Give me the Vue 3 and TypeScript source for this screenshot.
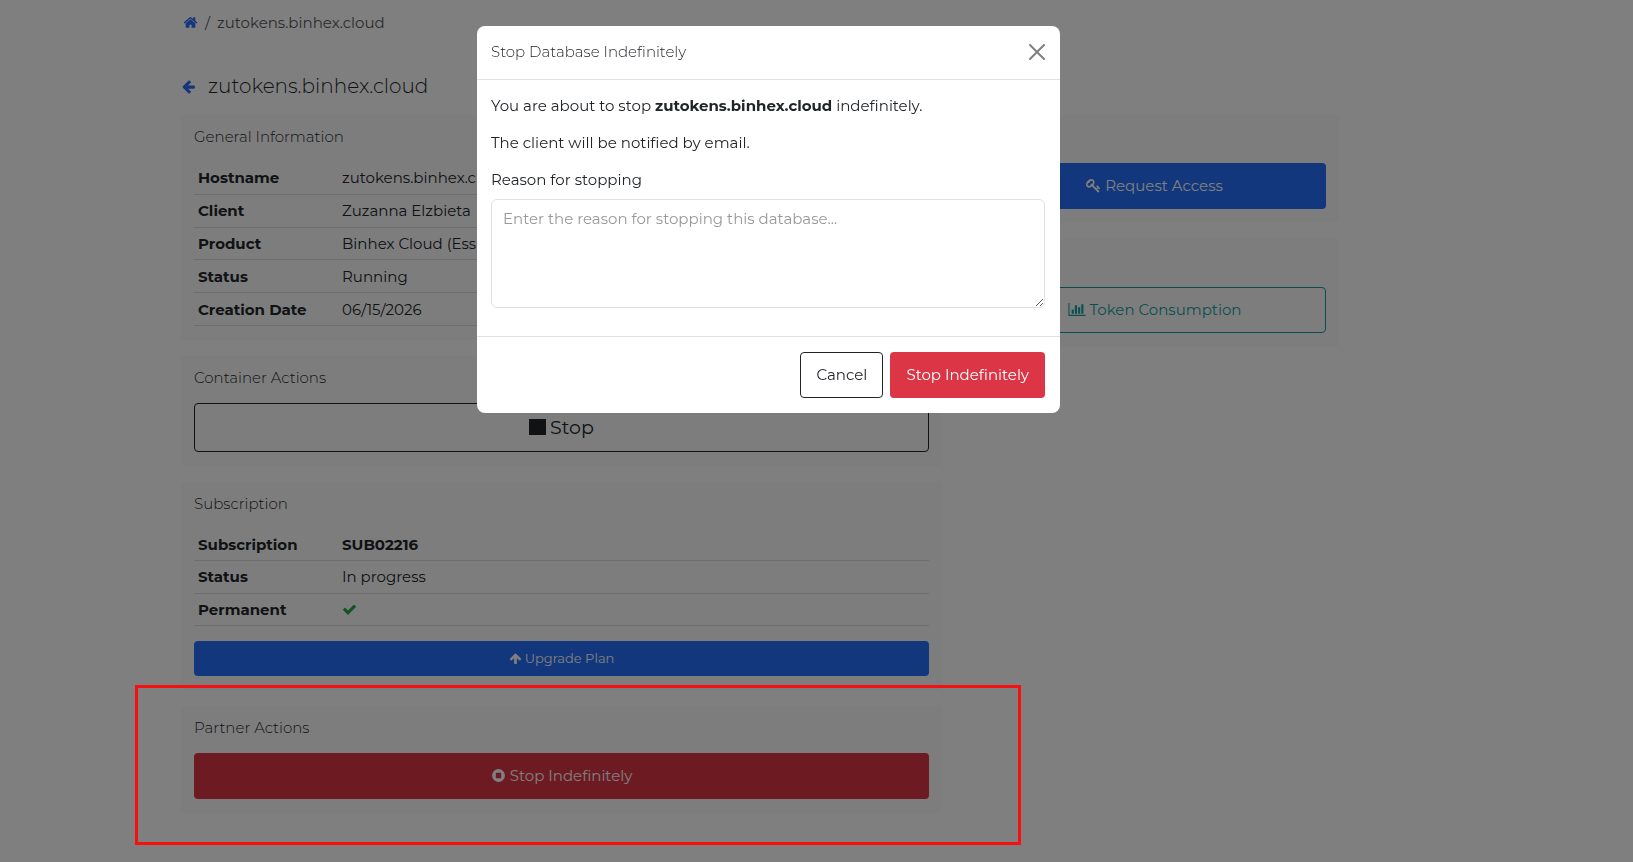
<script setup lang="ts">
import { ref } from 'vue'

interface Row {
  label: string
  value: string
  strong?: boolean
  check?: boolean
}

const hostname = 'zutokens.binhex.cloud'

const general: Row[] = [
  { label: 'Hostname', value: hostname },
  { label: 'Client', value: 'Zuzanna Elzbieta' },
  { label: 'Product', value: 'Binhex Cloud (Ess' },
  { label: 'Status', value: 'Running' },
  { label: 'Creation Date', value: '06/15/2026' },
]

const subscription: Row[] = [
  { label: 'Subscription', value: 'SUB02216', strong: true },
  { label: 'Status', value: 'In progress' },
  { label: 'Permanent', value: '', check: true },
]

const modalOpen = ref(true)
const reason = ref('')

const icons = {
  home: 'M1472 992v480q0 26-19 45t-45 19h-384v-384h-256v384h-384q-26 0-45-19t-19-45v-480q0-1 .5-3t.5-3l575-474 575 474q1 2 1 6zm223-69l-62 74q-8 9-21 11h-3q-13 0-21-7l-692-577-692 577q-12 8-24 7-13-2-21-11l-62-74q-8-10-7-23.5t11-21.5l719-599q32-26 76-26t76 26l244 204v-195q0-14 9-23t23-9h192q14 0 23 9t9 23v408l219 182q10 8 11 21.5t-7 23.5z',
  left: 'M1664 896v128q0 53-32.5 90.5t-84.5 37.5h-704l293 294q38 36 38 90t-38 90l-75 76q-37 37-90 37-52 0-91-37l-651-652q-37-37-37-90 0-52 37-91l651-650q38-38 91-38 52 0 90 38l75 74q38 38 38 91t-38 91l-293 293h704q52 0 84.5 37.5t32.5 90.5z',
  up: 'M1675 971q0 51-37 90l-75 75q-38 38-91 38-54 0-90-38l-294-293v704q0 52-37.5 84.5t-90.5 32.5h-128q-53 0-90.5-32.5t-37.5-84.5v-704l-294 293q-36 38-90 38t-90-38l-75-75q-38-38-38-90 0-53 38-91l651-651q35-37 90-37 54 0 91 37l651 651q37 39 37 91z',
  check: 'M1671 566q0 40-28 68l-724 724-136 136q-28 28-68 28t-68-28l-136-136-362-362q-28-28-28-68t28-68l136-136q28-28 68-28t68 28l294 295 656-657q28-28 68-28t68 28l136 136q28 28 28 68z',
  chart: 'M640 896v512h-256v-512h256zm384-512v1024h-256v-1024h256zm1024 1152v128h-2048v-1536h128v1408h1920zm-640-896v768h-256v-768h256zm384-384v1152h-256v-1152h256z',
  key: 'M832 512q0-80-56-136t-136-56-136 56-56 136q0 42 19 83-41-19-83-19-80 0-136 56t-56 136 56 136 136 56 136-56 56-136q0-42-19-83 41 19 83 19 80 0 136-56t56-136zm851 704q0 17-49 66t-66 49q-9 0-28.5-16t-36.5-33-38.5-40-24.5-26l-96 96 220 220q28 28 28 68 0 42-39 81t-81 39q-40 0-68-28l-671-671q-176 131-365 131-163 0-265.5-102.5t-102.5-265.5q0-160 95-313t248-248 313-95q163 0 265.5 102.5t102.5 265.5q0 189-131 365l355 355 96-96q-3-3-26-24.5t-40-38.5-33-36.5-16-28.5q0-17 49-66t66-49q13 0 23 10 6 6 46 44.5t82 79.5 86.5 86 73 78 28.5 41z',
  stopCircle: 'M896 128a768 768 0 1 0 0 1536a768 768 0 1 0 0-1536zM624 576h544q48 0 48 48v544q0 48-48 48h-544q-48 0-48-48v-544q0-48 48-48z',
}
</script>

<template>
  <div class="page">
    <main class="shell">
      <nav class="crumbs" aria-label="Breadcrumb">
        <a href="#" aria-label="Home">
          <svg class="icon" viewBox="0 0 1792 1792"><path :d="icons.home" /></svg>
        </a>
        <span>/</span>
        <span>{{ hostname }}</span>
      </nav>

      <header class="title">
        <a href="#" aria-label="Back">
          <svg class="icon" viewBox="0 0 1792 1792"><path :d="icons.left" /></svg>
        </a>
        <h1>{{ hostname }}</h1>
      </header>

      <div class="columns">
        <div class="stack">
          <section class="card">
            <h2>General Information</h2>
            <table class="general">
              <tbody>
                <tr v-for="row in general" :key="row.label">
                  <th scope="row">{{ row.label }}</th>
                  <td>{{ row.value }}</td>
                </tr>
              </tbody>
            </table>
          </section>

          <section class="card">
            <h2>Container Actions</h2>
            <button type="button" class="btn outline-dark large">
              <span class="square"></span>Stop
            </button>
          </section>

          <section class="card">
            <h2>Subscription</h2>
            <table class="subscription">
              <tbody>
                <tr v-for="row in subscription" :key="row.label">
                  <th scope="row">{{ row.label }}</th>
                  <td :class="{ strong: row.strong }">
                    <svg v-if="row.check" class="icon check" viewBox="0 0 1792 1792" role="img" aria-label="Yes">
                      <path :d="icons.check" />
                    </svg>
                    <template v-else>{{ row.value }}</template>
                  </td>
                </tr>
              </tbody>
            </table>
            <button type="button" class="btn primary small">
              <svg class="icon tiny" viewBox="0 0 1792 1792"><path :d="icons.up" /></svg>Upgrade Plan
            </button>
          </section>

          <section class="card highlighted">
            <h2>Partner Actions</h2>
            <button type="button" class="btn danger" @click="modalOpen = true">
              <svg class="icon" viewBox="0 0 1792 1792"><path fill-rule="evenodd" :d="icons.stopCircle" /></svg>Stop Indefinitely
            </button>
          </section>
        </div>

        <aside class="stack">
          <section class="card untitled">
            <button type="button" class="btn primary">
              <svg class="icon" viewBox="0 0 1792 1792"><path :d="icons.key" /></svg>Request Access
            </button>
          </section>
          <section class="card untitled">
            <button type="button" class="btn outline-info">
              <svg class="icon wide" viewBox="0 0 2048 1792"><path :d="icons.chart" /></svg>Token Consumption
            </button>
          </section>
        </aside>
      </div>
    </main>

    <div v-if="modalOpen" class="backdrop">
      <div class="modal" role="dialog" aria-modal="true" aria-labelledby="modal-title">
        <header class="modal-head">
          <h2 id="modal-title">Stop Database Indefinitely</h2>
          <button type="button" class="close" aria-label="Close" @click="modalOpen = false">
            <svg viewBox="0 0 16 16"><path d="M1 1L15 15M15 1L1 15" /></svg>
          </button>
        </header>
        <div class="modal-body">
          <p>You are about to stop <strong>{{ hostname }}</strong> indefinitely.</p>
          <p>The client will be notified by email.</p>
          <label for="reason">Reason for stopping</label>
          <textarea id="reason" v-model="reason" placeholder="Enter the reason for stopping this database..."></textarea>
        </div>
        <footer class="modal-foot">
          <button type="button" class="btn outline-dark" @click="modalOpen = false">Cancel</button>
          <button type="button" class="btn danger">Stop Indefinitely</button>
        </footer>
      </div>
    </div>
  </div>
</template>

<style>
body {
  margin: 0;
  background: #fff;
}
</style>

<style scoped>
.page {
  box-sizing: border-box;
  min-height: 100vh;
  padding: 11px 96px 24px;
  color: #212529;
  font-family: Montserrat, Inter, "Open Sans", sans-serif;
  font-size: 15px;
  line-height: 23px;
}
.page *,
.page *::after {
  box-sizing: border-box;
}
.shell {
  max-width: 1158px;
  margin-left: 85px;
}
h1,
h2,
p {
  margin: 0;
}
h1,
h2 {
  font-weight: 300;
}
a {
  display: flex;
  color: #2b6cf6;
}
.icon {
  width: 15px;
  height: 15px;
  flex: none;
  fill: currentColor;
}
.icon.wide {
  width: 18px;
}
.icon.tiny {
  width: 13px;
  height: 13px;
}

.crumbs {
  display: flex;
  align-items: center;
  gap: 7px;
  padding-left: 2px;
  color: #55595d;
}
.title {
  display: flex;
  align-items: center;
  gap: 12px;
  margin: 36px 0 13px;
}
.title h1 {
  font-size: 20px;
  line-height: 32px;
}

.columns {
  display: grid;
  grid-template-columns: minmax(0, 761fr) minmax(0, 369fr);
  gap: 28px;
  align-items: start;
}
.stack {
  display: grid;
  gap: 16px;
}
.card {
  padding: 0 13px 14px;
  border-radius: 4px;
  background: #fbfbfc;
}
.card h2 {
  padding: 10px 0 14px;
  font-size: 15px;
}
.card.untitled {
  padding-top: 48px;
}
.highlighted {
  position: relative;
}
.highlighted::after {
  content: "";
  position: absolute;
  z-index: 20;
  inset: -21px -79px -32px -46px;
  border: 3px solid #f81010;
  pointer-events: none;
}

table {
  width: 100%;
  border-collapse: collapse;
}
.general {
  height: 164px;
}
.subscription {
  height: 97px;
  margin-bottom: 15px;
}
th,
td {
  padding: 3px 4px;
  border-bottom: 1px solid #dadde0;
  text-align: left;
}
th {
  width: 144px;
  font-weight: 700;
}
.strong {
  font-weight: 700;
}
.check {
  display: block;
  color: #28a745;
}

.btn {
  display: flex;
  align-items: center;
  justify-content: center;
  gap: 4px;
  height: 46px;
  padding: 0 15px 1px;
  border: 1px solid transparent;
  border-radius: 4px;
  background: transparent;
  color: #212529;
  font: inherit;
  cursor: pointer;
}
.card .btn {
  width: 100%;
}
.btn.primary {
  background: #246ff8;
  color: #fff;
}
.btn.danger {
  background: #dc3545;
  color: #fff;
}
.btn.outline-dark {
  border-color: #212529;
}
.btn.outline-info {
  border-color: #159f9f;
  color: #159f9f;
}
.btn.small {
  height: 35px;
  gap: 3px;
  font-size: 13px;
}
.btn.large {
  height: 49px;
  font-size: 19px;
}
.square {
  width: 17px;
  height: 16px;
  background: currentColor;
}

.backdrop {
  position: fixed;
  z-index: 10;
  inset: 0;
  display: flex;
  align-items: flex-start;
  justify-content: center;
  padding: 26px 96px 26px 0;
  background: rgba(0, 0, 0, 0.5);
}
.modal {
  width: 100%;
  max-width: 583px;
  border-radius: 8px;
  background: #fff;
}
.modal-head {
  display: flex;
  align-items: center;
  justify-content: space-between;
  height: 54px;
  padding: 0 15px 2px 14px;
  border-bottom: 1px solid #dee2e6;
}
.modal-head h2 {
  font-size: 15px;
}
.close {
  display: flex;
  padding: 0;
  border: 0;
  background: none;
  cursor: pointer;
}
.close svg {
  width: 16px;
  height: 16px;
  fill: none;
  stroke: #7f7f7f;
  stroke-width: 2;
  stroke-linecap: round;
}
.modal-body {
  padding: 14px 15px 28px 14px;
}
.modal-body p {
  margin-bottom: 14px;
}
.modal-body strong {
  font-weight: 700;
}
.modal-body label {
  display: block;
  margin-bottom: 8px;
}
textarea {
  display: block;
  width: 100%;
  height: 109px;
  padding: 7px 11px;
  border: 1px solid #dee2e6;
  border-radius: 6px;
  background: #fff;
  color: inherit;
  font: inherit;
  resize: vertical;
}
textarea::placeholder {
  color: #999;
  opacity: 1;
}
.modal-foot {
  display: flex;
  justify-content: flex-end;
  gap: 7px;
  padding: 15px;
  border-top: 1px solid #dee2e6;
}
</style>
